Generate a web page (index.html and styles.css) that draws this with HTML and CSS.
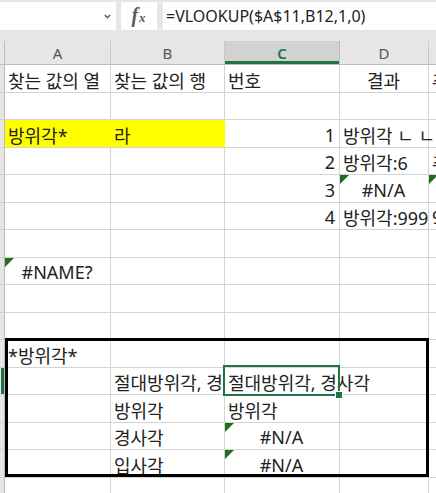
FILE: index.html
```html
<!DOCTYPE html>
<html lang="ko">
<head>
<meta charset="utf-8">
<title>VLOOKUP</title>
<link rel="stylesheet" href="styles.css">
</head>
<body>
<div class="app">
  <div class="fbar">
    <div class="namebox">
      <svg class="chev" width="7" height="5" viewBox="0 0 7 5"><path d="M0.8 1 L3.5 3.8 L6.2 1" fill="none" stroke="#555" stroke-width="1.3"/></svg>
    </div>
    <div class="fxbox"><span class="fx">f<span class="fxx">x</span></span></div>
    <div class="formula">=VLOOKUP($A$11,B12,1,0)</div>
  </div>

  <div class="sheet">
    <!-- header -->
    <div class="h corner"></div>
    <div class="h">A</div>
    <div class="h">B</div>
    <div class="h hsel">C</div>
    <div class="h">D</div>
    <div class="h">E</div>

    <!-- row 1 -->
    <div class="rh"></div>
    <div class="c clip">찾는 값의 열</div>
    <div class="c clip">찾는 값의 행</div>
    <div class="c">번호</div>
    <div class="c m">결과</div>
    <div class="c">추출</div>

    <!-- row 2 -->
    <div class="rh"></div><div class="c"></div><div class="c"></div><div class="c"></div><div class="c"></div><div class="c"></div>

    <!-- row 3 -->
    <div class="rh"></div>
    <div class="c y">방위각*</div>
    <div class="c y">라</div>
    <div class="c r">1</div>
    <div class="c">방위각 ㄴ ㄴㄴ</div>
    <div class="c"></div>

    <!-- row 4 -->
    <div class="rh"></div>
    <div class="c"></div>
    <div class="c"></div>
    <div class="c r">2</div>
    <div class="c clip">방위각:6</div>
    <div class="c">추</div>

    <!-- row 5 -->
    <div class="rh"></div>
    <div class="c"></div>
    <div class="c"></div>
    <div class="c r">3</div>
    <div class="c m tri">#N/A</div>
    <div class="c tri"></div>

    <!-- row 6 -->
    <div class="rh"></div>
    <div class="c"></div>
    <div class="c"></div>
    <div class="c r">4</div>
    <div class="c clip">방위각:999</div>
    <div class="c">9</div>

    <!-- row 7 -->
    <div class="rh"></div><div class="c"></div><div class="c"></div><div class="c"></div><div class="c"></div><div class="c"></div>

    <!-- row 8 -->
    <div class="rh"></div>
    <div class="c m tri">#NAME?</div>
    <div class="c"></div><div class="c"></div><div class="c"></div><div class="c"></div>

    <!-- row 9 -->
    <div class="rh"></div><div class="c"></div><div class="c"></div><div class="c"></div><div class="c"></div><div class="c"></div>
    <!-- row 10 -->
    <div class="rh"></div><div class="c"></div><div class="c"></div><div class="c"></div><div class="c"></div><div class="c"></div>

    <!-- row 11 -->
    <div class="rh"></div>
    <div class="c">*방위각*</div>
    <div class="c"></div><div class="c"></div><div class="c"></div><div class="c"></div>

    <!-- row 12 -->
    <div class="rh rhsel"></div>
    <div class="c"></div>
    <div class="c clip">절대방위각, 경사각</div>
    <div class="c">절대방위각, 경사각</div>
    <div class="c"></div>
    <div class="c"></div>

    <!-- row 13 -->
    <div class="rh"></div>
    <div class="c"></div>
    <div class="c">방위각</div>
    <div class="c">방위각</div>
    <div class="c"></div><div class="c"></div>

    <!-- row 14 -->
    <div class="rh"></div>
    <div class="c"></div>
    <div class="c">경사각</div>
    <div class="c m tri">#N/A</div>
    <div class="c"></div><div class="c"></div>

    <!-- row 15 -->
    <div class="rh"></div>
    <div class="c"></div>
    <div class="c">입사각</div>
    <div class="c m tri">#N/A</div>
    <div class="c"></div><div class="c"></div>

    <!-- row 16 -->
    <div class="rh"></div><div class="c"></div><div class="c"></div><div class="c"></div><div class="c"></div><div class="c"></div>

    <div class="rangebox"></div>
    <div class="selcell"><span class="handle"></span></div>
  </div>
</div>
</body>
</html>
```

FILE: styles.css
```css
html, body {
  margin: 0;
  padding: 0;
  background: #ffffff;
  overflow: hidden;
}

.app {
  width: 436px;
  height: 493px;
  overflow: hidden;
  font-family: "Noto Sans", "Noto Sans CJK KR", sans-serif;
}

/* formula bar */
.fbar {
  height: 41px;
  background: #e6e6e6;
  display: flex;
  align-items: flex-start;
  padding-top: 2px;
  box-sizing: border-box;
}

.namebox {
  width: 116px;
  height: 28px;
  background: #ffffff;
  display: flex;
  align-items: center;
  justify-content: flex-end;
  padding-right: 5px;
  box-sizing: border-box;
  flex: none;
}

.chev {
  display: block;
  margin-top: 1px;
}

.fxbox {
  margin-left: 5px;
  width: 36px;
  height: 28px;
  background: #ffffff;
  display: flex;
  align-items: center;
  justify-content: center;
  flex: none;
}

.fx {
  font-family: "Liberation Serif", serif;
  font-style: italic;
  font-weight: bold;
  font-size: 20px;
  color: #5a5a5a;
  line-height: 1;
  margin-top: -2px;
  margin-left: -1px;
}

.fxx {
  font-size: 13px;
  margin-left: 1px;
}

.formula {
  margin-left: 6px;
  flex: 1;
  height: 28px;
  background: #ffffff;
  font-size: 16px;
  color: #222222;
  display: flex;
  align-items: center;
  padding-left: 3px;
  white-space: nowrap;
}

/* sheet */
.sheet {
  position: relative;
  display: grid;
  grid-template-columns: 5px 106px 114px 115px 89px 60px;
  grid-template-rows: 24px repeat(8, 28px 27px);
  width: 489px;
}

.h {
  background: #e6e6e6;
  border-right: 1px solid #cacaca;
  border-bottom: 1px solid #bcbcbc;
  display: flex;
  align-items: center;
  justify-content: center;
  font-size: 15px;
  color: #555555;
  box-sizing: border-box;
  padding-top: 1px;
}

.corner {
  border-right: 1px solid #bcbcbc;
}

.hsel {
  background: #d2d2d2;
  color: #217346;
  font-weight: 600;
  box-shadow: inset 0 -3px 0 #217346;
  border-right-color: #bcbcbc;
}

.rh {
  background: #e6e6e6;
  border-right: 1px solid #bcbcbc;
  border-bottom: 1px solid #d0d0d0;
  box-sizing: border-box;
}

.rhsel {
  background: #217346;
  border-left: 1px solid #e6e6e6;
}

.c {
  position: relative;
  box-sizing: border-box;
  border-right: 1px solid #d4d4d4;
  border-bottom: 1px solid #d4d4d4;
  display: flex;
  align-items: center;
  padding: 2px 4px 0 3px;
  white-space: nowrap;
  font-size: 18px;
  color: #222222;
  min-width: 0;
}

.clip {
  overflow: hidden;
}

.r {
  justify-content: flex-end;
}

.m {
  justify-content: center;
}

.y {
  background: #ffff00;
  border-right-color: #ffff00;
}

.tri::before {
  content: "";
  position: absolute;
  left: 0;
  top: 0;
  width: 0;
  height: 0;
  border-top: 9px solid #1e6e1e;
  border-right: 9px solid transparent;
}

/* overlays */
.rangebox {
  position: absolute;
  left: 5px;
  top: 297px;
  width: 424px;
  height: 139px;
  border: 3px solid #000000;
  box-sizing: border-box;
  pointer-events: none;
}

.selcell {
  position: absolute;
  left: 223px;
  top: 324px;
  width: 117px;
  height: 31px;
  border: 2px solid #217346;
  box-sizing: border-box;
}

.handle {
  position: absolute;
  right: -5px;
  bottom: -5px;
  width: 6px;
  height: 6px;
  background: #217346;
  border: 1px solid #ffffff;
}
```
